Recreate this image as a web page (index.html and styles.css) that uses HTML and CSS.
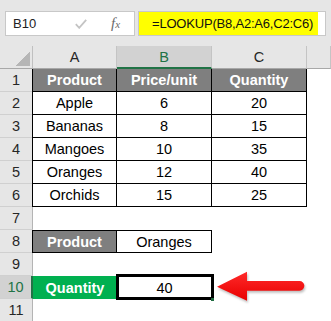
FILE: index.html
```html
<!DOCTYPE html>
<html>
<head>
<meta charset="utf-8">
<link rel="stylesheet" href="styles.css">
</head>
<body>
<div class="app">
  <div class="fbar">
    <div class="namebox">
      <span class="ref">B10</span>
      <svg class="check" width="12" height="10" viewBox="0 0 12 10"><polyline points="0.8,5.2 4.2,8.8 11.2,0.8" fill="none" stroke="#c4c4c4" stroke-width="1.8"/></svg>
      <span class="fx"><i>f</i><i class="x">x</i></span>
    </div>
    <div class="finput"><span class="formula">=LOOKUP(B8,A2:A6,C2:C6)</span></div>
  </div>
  <div class="sheet">
    <div class="corner"></div>
    <div class="ch">A</div><div class="ch csel">B</div><div class="ch">C</div><div class="ch"></div>

    <div class="rh">1</div><div class="c hd first">Product</div><div class="c hd">Price/unit</div><div class="c hd">Quantity</div><div class="e"></div>
    <div class="rh">2</div><div class="c first">Apple</div><div class="c">6</div><div class="c">20</div><div class="e"></div>
    <div class="rh">3</div><div class="c first">Bananas</div><div class="c">8</div><div class="c">15</div><div class="e"></div>
    <div class="rh">4</div><div class="c first">Mangoes</div><div class="c">10</div><div class="c">35</div><div class="e"></div>
    <div class="rh">5</div><div class="c first">Oranges</div><div class="c">12</div><div class="c">40</div><div class="e"></div>
    <div class="rh">6</div><div class="c first">Orchids</div><div class="c">15</div><div class="c">25</div><div class="e"></div>
    <div class="rh">7</div><div class="e"></div><div class="e"></div><div class="e"></div><div class="e"></div>
    <div class="rh">8</div><div class="c hd first top">Product</div><div class="c top">Oranges</div><div class="e"></div><div class="e"></div>
    <div class="rh">9</div><div class="e"></div><div class="e"></div><div class="e"></div><div class="e"></div>
    <div class="rh rsel">10</div><div class="c green">Quantity</div><div class="c active">40</div><div class="e"></div><div class="e"></div>
    <div class="rh">11</div><div class="e"></div><div class="e"></div><div class="e"></div><div class="e"></div>
  </div>
  <svg class="arrow" width="100" height="42" viewBox="0 0 100 42">
    <defs>
      <linearGradient id="rg" x1="0" y1="0" x2="0" y2="1">
        <stop offset="0" stop-color="#ff2a2a"/>
        <stop offset="1" stop-color="#e80000"/>
      </linearGradient>
    </defs>
    <path d="M7,20.7 L37,5.7 L37,15 L89.5,15 A4.85,4.85 0 0 1 89.5,24.7 L37,24.7 L37,34.7 Z" fill="url(#rg)"/>
  </svg>
</div>
</body>
</html>
```

FILE: styles.css
```css
html, body {
  margin: 0;
  padding: 0;
  background: #ffffff;
}

.app {
  position: relative;
  width: 331px;
  height: 321px;
  overflow: hidden;
  font-family: "Liberation Sans", Arial, sans-serif;
}

.fbar {
  height: 46px;
  box-sizing: border-box;
  padding-top: 11px;
  background: #e6e6e6;
  display: flex;
  align-items: flex-start;
}

.namebox {
  margin-left: 5px;
  width: 130px;
  height: 25px;
  box-sizing: border-box;
  border: 1px solid #c8c8c8;
  background: #ffffff;
  display: flex;
  align-items: center;
}

.ref {
  margin-left: 7px;
  font-size: 13px;
  color: #222222;
  width: 25px;
}

.check {
  margin-left: 37px;
  margin-top: 1px;
}

.fx {
  margin-left: 24px;
  font-family: "Liberation Serif", "Times New Roman", serif;
  color: #6a6a6a;
  font-size: 15px;
  line-height: 1;
}

.fx .x {
  font-size: 11px;
}

.finput {
  margin-left: 3px;
  width: 188px;
  height: 25px;
  box-sizing: border-box;
  border: 1px solid #c8c8c8;
  background: #ffffff;
  display: flex;
}

.formula {
  width: 179px;
  height: 100%;
  box-sizing: border-box;
  background: #ffff00;
  padding-left: 13px;
  font-size: 13px;
  letter-spacing: -0.2px;
  color: #111111;
  display: flex;
  align-items: center;
}

.sheet {
  display: grid;
  grid-template-columns: 33px 84px 95px 95px 24px;
  grid-template-rows: repeat(12, 23px);
  font-size: 14.5px;
  color: #000000;
}

.corner {
  background: #e6e6e6 linear-gradient(to bottom right, transparent 50%, #b6b6b6 50%) 15px 6px / 15px 14px no-repeat;
  border-right: 1px solid #c0c0c0;
  border-bottom: 1px solid #a8a8a8;
}

.ch {
  background: #e6e6e6;
  border-right: 1px solid #c4c4c4;
  border-bottom: 1px solid #a8a8a8;
  display: flex;
  align-items: center;
  justify-content: center;
  font-size: 14.5px;
  color: #262626;
}

.ch.csel {
  background: #d2d2d2;
  color: #217346;
  border-bottom: 2px solid #217346;
}

.rh {
  background: #e6e6e6;
  border-right: 1px solid #b4b4b4;
  border-bottom: 1px solid #d0d0d0;
  display: flex;
  align-items: center;
  justify-content: center;
  font-size: 14.5px;
  color: #262626;
}

.rh.rsel {
  background: #d2d2d2;
  color: #217346;
  border-right: 2px solid #217346;
}

.c {
  box-sizing: border-box;
  border-right: 1px solid #000000;
  border-bottom: 1px solid #000000;
  display: flex;
  align-items: center;
  justify-content: center;
  background: #ffffff;
}

.c.first {
  box-shadow: -1px 0 0 #000000;
}

.c.top {
  border-top: 1px solid #000000;
}

.c.hd {
  background: #7f7f7f;
  color: #ffffff;
  font-weight: bold;
}

.c.green {
  background: #00b050;
  color: #ffffff;
  font-weight: bold;
  border: none;
}

.c.active {
  position: relative;
  border: none;
}

.c.active::before {
  content: "";
  position: absolute;
  left: -1px;
  top: -2px;
  right: -2px;
  bottom: -1px;
  border: 3px solid #000000;
}

.c.active::after {
  content: "";
  position: absolute;
  right: -2px;
  bottom: -2px;
  width: 3px;
  height: 3px;
  background: #1e6b40;
}

.e {
  background: #ffffff;
}

.arrow {
  position: absolute;
  left: 210px;
  top: 266px;
  filter: drop-shadow(1px 2px 1px rgba(0, 0, 0, 0.25));
}
```
